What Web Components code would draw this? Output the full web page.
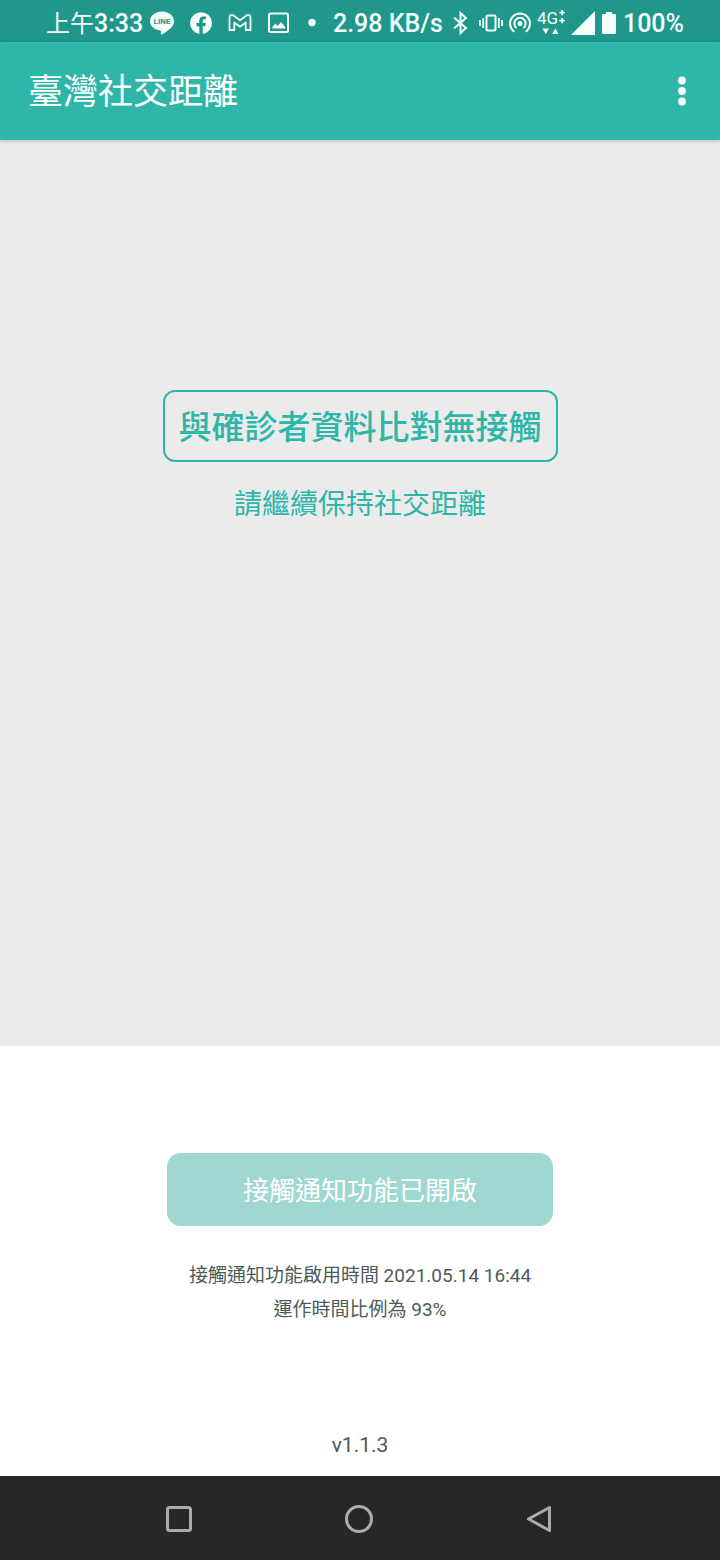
<!DOCTYPE html>
<html lang="zh-Hant">
<head>
<meta charset="utf-8">
<meta name="viewport" content="width=device-width, initial-scale=1">
<title>臺灣社交距離</title>
<style>
    body {
        margin: 0;
        font-family: Roboto, "Noto Sans CJK TC", sans-serif;
        --primary: #2eb6a9;
        --primary-dark: #1f978b;
        --primary-light: #9fd8d0;
        --surface: #ebebeb;
        --text: #4d5b58;
    }
</style>
</head>
<body>

<sd-app>
    <sd-status-bar slot="top" period="上午" time="3:33" speed="2.98 KB/s" battery="100%"></sd-status-bar>
    <sd-app-bar slot="top">臺灣社交距離</sd-app-bar>
    <sd-result>
        與確診者資料比對無接觸
        <span slot="hint">請繼續保持社交距離</span>
    </sd-result>
    <sd-panel slot="bottom">
        <sd-button slot="action">接觸通知功能已開啟</sd-button>
        <span slot="since">接觸通知功能啟用時間 2021.05.14 16:44</span>
        <span slot="ratio">運作時間比例為 93%</span>
        <span slot="version">v1.1.3</span>
    </sd-panel>
    <sd-nav-bar slot="bottom"></sd-nav-bar>
</sd-app>

<script>
// Attach an open shadow root with the given markup
function render(element, html) {
    const template = document.createElement('template')
    template.innerHTML = html
    element.attachShadow({mode: 'open'}).appendChild(template.content.cloneNode(true))
}

// Page frame: bars on top, panel and navigation at the bottom
class App extends HTMLElement {
    constructor() {
        super();
        render(this, `
            <style>
                :host {
                    display: flex;
                    flex-direction: column;
                    min-height: 100vh;
                }

                main {
                    flex: 1;
                    background: var(--surface);
                }
            </style>

            <slot name="top"></slot>
            <main><slot></slot></main>
            <slot name="bottom"></slot>
        `)
    }
}

// Status icons, every one is drawn in its own viewBox
const icons = {
    line: `<svg width="24" height="24" viewBox="0 0 24 24">
        <path d="M12 .5C5.400.5 0 4.800 0 10.100c0 4.800 4.300 8.800 10.100 9.500.9.2 1 .6.9 1.400l-.2 1.700c0 .6.3 1.100 1.200.7C15 22 20 18.500 22.200 15.600 23.500 14 24 12.200 24 10.100 24 4.800 18.600.5 12 .5z"/>
        <text x="12" y="13" text-anchor="middle" font-size="8" font-weight="700" fill="#1f978b">LINE</text></svg>`,
    facebook: `<svg width="24" height="24" viewBox="0 0 24 24">
        <path d="M23 12.100a11 11 0 1 0-12.700 10.900v-7.700H7.500v-3.200h2.800V9.700c0-2.800 1.600-4.300 4.100-4.300 1.200 0 2.500.2 2.500.2v2.700h-1.400c-1.400 0-1.800.9-1.800 1.700v2.100h3.100l-.5 3.200h-2.600V23A11 11 0 0 0 23 12.100z"/></svg>`,
    gmail: `<svg width="24" height="24" viewBox="0 0 24 24" fill="none" stroke="currentColor" stroke-width="1.8" stroke-linejoin="round">
        <path d="M1.500 6.500C1.500 4 3.800 3.200 5.500 4.500L12 9.300l6.500-4.800c1.700-1.300 4-.5 4 2v12.500h-4.800V11.500L12 15.700l-5.700-4.200V19H1.500z"/></svg>`,
    image: `<svg width="24" height="24" viewBox="0 0 24 24">
        <rect x="2" y="2.500" width="19" height="18.500" rx="1.500" fill="none" stroke="currentColor" stroke-width="2"/>
        <path d="M5.500 17.500v-2l3-3 2.200 2.500 3.300-4 4.200 5v1.500z"/></svg>`,
    dot: `<svg width="12" height="24" viewBox="0 0 12 24"><circle cx="6" cy="11.500" r="3.700"/></svg>`,
    bluetooth: `<svg width="24" height="24" viewBox="0 0 24 24" fill="none" stroke="currentColor" stroke-width="2">
        <path d="M5 6.500l12 10.500-5.500 5V2L17 7 5 17.500"/></svg>`,
    vibrate: `<svg width="24" height="24" viewBox="0 0 24 24">
        <rect x="7.500" y="4.500" width="9" height="15" rx="1" fill="none" stroke="currentColor" stroke-width="2"/>
        <path d="M0 9h1.800v6H0zM3.300 7h1.800v10H3.300zM18.900 7h1.800v10h-1.800zM22.200 9H24v6h-1.800z"/></svg>`,
    hotspot: `<svg width="22" height="24" viewBox="0 0 22 24" fill="none" stroke="currentColor" stroke-width="2">
        <path d="M5.300 20.700a10 10 0 1 1 11.400 0M7.700 17a5.700 5.700 0 1 1 6.600 0"/>
        <circle cx="11" cy="12.600" r="2.500" fill="currentColor" stroke="none"/></svg>`,
    network: `<svg width="28" height="28" viewBox="0 0 28 28">
        <text x="0" y="15" font-size="17" font-weight="400">4G</text>
        <path d="M24.200 1h1.700v1.800h1.800v1.600h-1.800v1.800h-1.700V4.400h-1.800V2.800h1.800zM24.200 9h1.700v1.800h1.800v1.600h-1.800v1.800h-1.700v-1.800h-1.800v-1.600h1.800zM5.500 19.500h6.500l-3.200 5.500zM15 25h6.500l-3.200-5.500z"/></svg>`,
    signal: `<svg width="24" height="24" viewBox="0 0 24 24"><path d="M24 0v24H0z"/></svg>`,
    battery: `<svg width="16" height="24" viewBox="0 0 16 24">
        <path d="M5 1h6v2h2.500c.8 0 1.500.7 1.500 1.500v17c0 .8-.7 1.500-1.500 1.500h-11c-.8 0-1.500-.7-1.500-1.500v-17C1 3.700 1.700 3 2.500 3H5z"/></svg>`,
}

class StatusBar extends HTMLElement {
    constructor() {
        super();
        render(this, `
            <style>
                :host {
                    display: flex;
                    justify-content: space-between;
                    align-items: center;
                    height: 42px;
                    padding: 4px 36px 0 46px;
                    box-sizing: border-box;
                    background: var(--primary-dark);
                    color: #f4fffd;
                    font-size: 25px;
                    font-weight: 500;
                    line-height: 34px;
                    white-space: nowrap;
                }

                div {
                    display: flex;
                    align-items: center;
                }

                .notifications {
                    gap: 15px;
                }

                .system {
                    gap: 6px;
                }

                time,
                .speed,
                .battery {
                    padding-top: 2px;
                }

                time {
                    margin-right: -8px;
                }

                .period {
                    font-size: 24px;
                    font-weight: 400;
                }

                svg {
                    display: block;
                    flex: none;
                    overflow: visible;
                    fill: currentColor;
                }

                svg[fill="none"] {
                    fill: none;
                }
            </style>

            <div class="notifications">
                <time><span class="period"></span><span class="clock"></span></time>
                ${icons.line}${icons.facebook}${icons.gmail}${icons.image}${icons.dot}
            </div>
            <div class="system">
                <span class="speed"></span>
                ${icons.bluetooth}${icons.vibrate}${icons.hotspot}${icons.network}${icons.signal}${icons.battery}
                <span class="battery"></span>
            </div>
        `)

        // Props
        this.shadowRoot.querySelector('.period').textContent = this.getAttribute('period')
        this.shadowRoot.querySelector('.clock').textContent = this.getAttribute('time')
        this.shadowRoot.querySelector('.speed').textContent = this.getAttribute('speed')
        this.shadowRoot.querySelector('.battery').textContent = this.getAttribute('battery')
    }
}

class AppBar extends HTMLElement {
    constructor() {
        super();
        render(this, `
            <style>
                :host {
                    display: flex;
                    justify-content: space-between;
                    align-items: center;
                    height: 98px;
                    padding: 0 14px 0 28px;
                    box-sizing: border-box;
                    background: var(--primary);
                    color: #fff;
                    box-shadow: 0 1px 4px rgba(0, 0, 0, .2);
                    z-index: 1;
                }

                h1 {
                    margin: 0;
                    padding-top: 4px;
                    font-size: 35px;
                    font-weight: 400;
                    line-height: 48px;
                }

                button {
                    display: flex;
                    justify-content: center;
                    align-items: center;
                    width: 48px;
                    height: 48px;
                    padding: 0;
                    border: 0;
                    background: none;
                    color: inherit;
                }
            </style>

            <h1><slot></slot></h1>
            <button type="button" aria-label="更多選項">
                <svg width="8" height="30" viewBox="0 0 8 30" fill="currentColor">
                    <circle cx="4" cy="4.500" r="3.900"/>
                    <circle cx="4" cy="15" r="3.900"/>
                    <circle cx="4" cy="25.500" r="3.900"/>
                </svg>
            </button>
        `)
    }
}

// Result of the comparison, outlined, with a hint below
class Result extends HTMLElement {
    constructor() {
        super();
        render(this, `
            <style>
                :host {
                    display: flex;
                    flex-direction: column;
                    align-items: center;
                    gap: 22px;
                    padding: 250px 24px 40px;
                    color: var(--primary);
                    text-align: center;
                }

                h2 {
                    margin: 0;
                    padding: 12px 14px 8px;
                    border: 2px solid;
                    border-radius: 12px;
                    font-size: 33px;
                    font-weight: 500;
                    line-height: 48px;
                }

                p {
                    margin: 0;
                    font-size: 28px;
                    line-height: 42px;
                }
            </style>

            <h2><slot></slot></h2>
            <p><slot name="hint"></slot></p>
        `)
    }
}

class Button extends HTMLElement {
    constructor() {
        super();
        render(this, `
            <style>
                :host {
                    display: block;
                }

                button {
                    display: block;
                    padding: 18px 76px 14px;
                    border: 0;
                    border-radius: 14px;
                    background: var(--primary-light);
                    color: #fff;
                    font-family: inherit;
                    font-size: 26px;
                    line-height: 41px;
                }
            </style>

            <button type="button" disabled><slot></slot></button>
        `)
    }
}

class Panel extends HTMLElement {
    constructor() {
        super();
        render(this, `
            <style>
                :host {
                    display: flex;
                    flex-direction: column;
                    align-items: center;
                    padding: 107px 24px 15px;
                    background: #fff;
                    color: var(--text);
                    font-size: 19px;
                    line-height: 34px;
                    text-align: center;
                }

                .info {
                    margin: 33px 0 102px;
                }

                p {
                    margin: 0;
                }

                footer {
                    font-size: 21px;
                    line-height: 32px;
                }
            </style>

            <slot name="action"></slot>
            <div class="info">
                <p><slot name="since"></slot></p>
                <p><slot name="ratio"></slot></p>
            </div>
            <footer><slot name="version"></slot></footer>
        `)
    }
}

class NavBar extends HTMLElement {
    constructor() {
        super();
        render(this, `
            <style>
                :host {
                    display: block;
                    background: #272727;
                    color: #ababab;
                }

                nav {
                    display: flex;
                    padding: 2px 12.5% 0;
                }

                button {
                    display: flex;
                    flex: 1;
                    justify-content: center;
                    align-items: center;
                    height: 82px;
                    padding: 0;
                    border: 0;
                    background: none;
                    color: inherit;
                }

                svg {
                    fill: none;
                    stroke: currentColor;
                    stroke-width: 3;
                    stroke-linejoin: round;
                }
            </style>

            <nav>
                <button type="button" aria-label="最近">
                    <svg width="30" height="30" viewBox="0 0 30 30"><rect x="2.500" y="3.500" width="23" height="23" rx="2"/></svg>
                </button>
                <button type="button" aria-label="首頁">
                    <svg width="30" height="30" viewBox="0 0 30 30"><circle cx="14" cy="15" r="12.500"/></svg>
                </button>
                <button type="button" aria-label="返回">
                    <svg width="30" height="30" viewBox="0 0 30 30"><path d="M24.500 3.500v23L3.500 15z"/></svg>
                </button>
            </nav>
        `)
    }
}

// Define the new elements
window.customElements.define('sd-app', App)
window.customElements.define('sd-status-bar', StatusBar)
window.customElements.define('sd-app-bar', AppBar)
window.customElements.define('sd-result', Result)
window.customElements.define('sd-button', Button)
window.customElements.define('sd-panel', Panel)
window.customElements.define('sd-nav-bar', NavBar)
</script>
</body>
</html>
